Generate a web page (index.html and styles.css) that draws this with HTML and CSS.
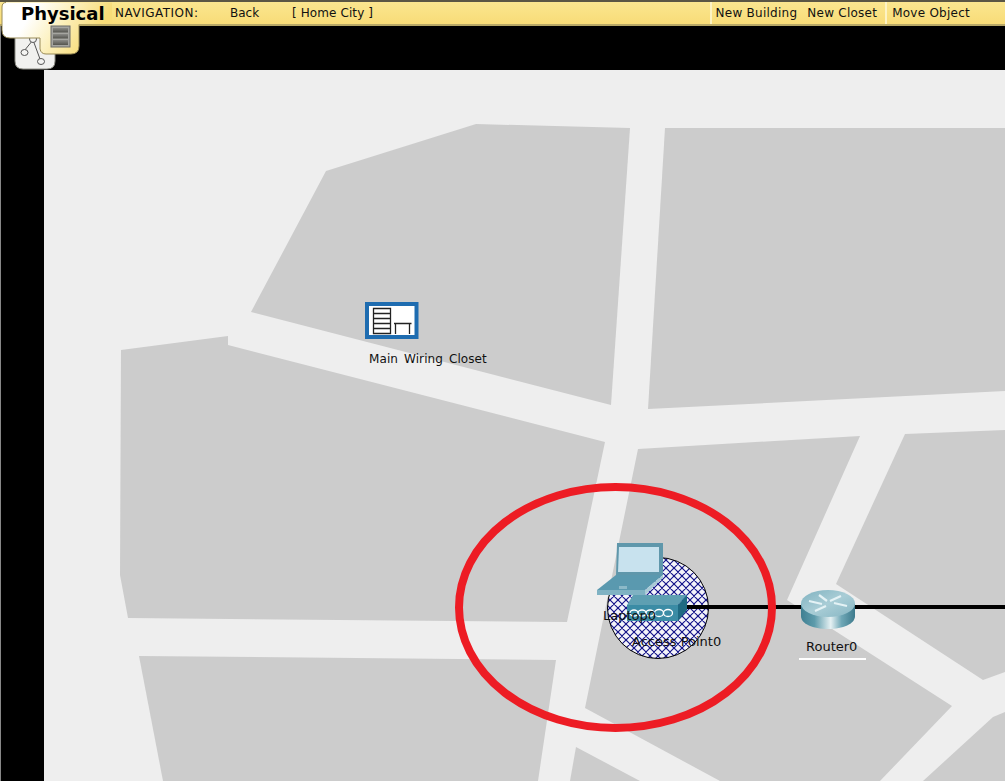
FILE: index.html
```html
<!DOCTYPE html>
<html lang="en">
<head>
<meta charset="utf-8">
<title>Physical Workspace</title>
<link rel="stylesheet" href="styles.css">
</head>
<body>
<div class="app">
  <header class="toolbar">
    <span class="title">Physical</span>
    <span class="nav-label">NAVIGATION:</span>
    <span class="nav-back">Back</span>
    <span class="nav-home">[ Home City ]</span>
    <div class="actions">
      <span class="action first">New Building</span>
      <span class="action">New Closet</span>
      <span class="action sep">Move Object</span>
    </div>
  </header>
  <main class="work">
    <svg class="map" viewBox="44 70 961 711" xmlns="http://www.w3.org/2000/svg">
      <defs>
        <pattern id="hatch" width="8" height="8" patternUnits="userSpaceOnUse" patternTransform="translate(2 0)">
          <rect width="8" height="8" fill="#f4f4fa"/>
          <path class="hatch-lines" d="M-1 -1L9 9M-1 9L9 -1M-1 7L1 9M7 -1L9 1M-1 1L1 -1M7 9L9 7"/>
          <path class="hatch-nodes" d="M4 2.800L5.200 4L4 5.200L2.800 4ZM0 -1.200L1.200 0L0 1.200L-1.200 0ZM8 -1.200L9.200 0L8 1.200L6.800 0ZM0 6.800L1.200 8L0 9.200L-1.200 8ZM8 6.800L9.200 8L8 9.200L6.800 8Z"/>
        </pattern>
        <linearGradient id="routerSide" x1="0" x2="1" y1="0" y2="0">
          <stop offset="0" stop-color="#3f7f92"/>
          <stop offset=".25" stop-color="#5d9bab"/>
          <stop offset=".55" stop-color="#e6f1f3"/>
          <stop offset=".75" stop-color="#6fa7b6"/>
          <stop offset="1" stop-color="#3d7a8c"/>
        </linearGradient>
        <linearGradient id="routerTop" x1="0" x2="1" y1="0" y2="1">
          <stop offset="0" stop-color="#7fb2c0"/>
          <stop offset=".5" stop-color="#a9cdd6"/>
          <stop offset="1" stop-color="#86b6c3"/>
        </linearGradient>
      </defs>
      <g class="blocks">
        <polygon points="251,312 326,171 476,124 630,128 611,405"/>
        <polygon points="665,128 1005,128 1005,391 648,409"/>
        <polygon points="121,350 228,336 228,345 605,442 567,622 128,618 120,575"/>
        <polygon points="638,449 860,436 787,600 952,706 880,781 720,781 585,708"/>
        <polygon points="139,656 556,660 538,781 163,781"/>
        <polygon points="576,747 640,781 570,781"/>
        <polygon points="905,434 1005,430 1005,672 983,680 836,584"/>
        <polygon points="993,717 1005,712 1005,781 923,781"/>
      </g>

      <circle class="range" cx="658" cy="608" r="50.500"/>
      <line class="cable" x1="687" y1="607" x2="1005" y2="607"/>

      <g class="closet">
        <rect class="closet-frame" x="367" y="304" width="49.500" height="33"/>
        <path class="closet-lines" d="M373.500 308.500H390.500V333.500H373.500ZM373.500 313.500H390.500M373.500 318.500H390.500M373.500 323.500H390.500M373.500 328.500H390.500M394 323.500H411.500M395.500 323.500V334M409.500 323.500V334"/>
      </g>
      <text class="label closet-label" x="369" y="363">Main Wiring Closet</text>

      <g class="laptop">
        <path fill="#5f97ab" d="M617 543H663V575H616Z"/>
        <path fill="#c8e2ee" d="M619 547H659V572H618Z"/>
        <path fill="#5a99af" d="M616 575H663L645 590H597Z"/>
        <path fill="#7fb2c3" d="M597 590H645V595H597Z"/>
        <path fill="#a9cbd6" d="M645 590L663 575V578L645 595Z"/>
        <path fill="#8cb9c8" d="M619 586H627V589H619Z"/>
      </g>
      <g class="ap">
        <path fill="#5e9fb2" d="M633 595H687L678 605H627Z"/>
        <path fill="#3b8ca5" d="M627 605H678V621H627Z"/>
        <path fill="#1f6a82" d="M678 605L687 595V610L678 621Z"/>
        <g class="waves">
          <ellipse cx="634" cy="613" rx="4" ry="3"/>
          <ellipse cx="642" cy="613" rx="4" ry="3"/>
          <ellipse cx="650" cy="613" rx="4" ry="3"/>
          <ellipse cx="659" cy="613" rx="4.500" ry="3.500"/>
          <ellipse cx="668" cy="613" rx="4.500" ry="3.500"/>
        </g>
      </g>
      <text class="label" x="603" y="620">Laptop0</text>
      <text class="label" x="632" y="646">Access Point0</text>

      <g class="router">
        <path fill="url(#routerSide)" d="M801 604V616C801 624 813 629 828 629S855 624 855 616V604Z"/>
        <ellipse cx="828" cy="603.500" rx="27" ry="13.500" fill="url(#routerTop)"/>
        <path class="arrows" d="M809 601L822 604M815 611L826 606M847 606L834 603M841 596L830 601M819 595L827 601"/>
      </g>
      <text class="label" x="806" y="651">Router0</text>
      <line class="underline" x1="799" y1="659" x2="866" y2="659"/>

      <ellipse class="ring" cx="615.500" cy="607.500" rx="156.500" ry="120.500"/>
    </svg>
  </main>

  <svg class="tabs" viewBox="0 0 112 72" xmlns="http://www.w3.org/2000/svg">
    <defs>
      <linearGradient id="tabFill" gradientUnits="userSpaceOnUse" x1="30" y1="15" x2="85" y2="50">
        <stop offset="0" stop-color="#ffffff"/>
        <stop offset="0.45" stop-color="#fcf1c0"/>
        <stop offset="1" stop-color="#f8dc78"/>
      </linearGradient>
      <linearGradient id="shelf" x1="0" x2="0" y1="0" y2="1">
        <stop offset="0" stop-color="#8a8a86"/>
        <stop offset="1" stop-color="#55554f"/>
      </linearGradient>
    </defs>
    <path class="logical-tab" d="M15 30H55V61Q55 69 47 69H23Q15 69 15 61Z"/>
    <g class="logical-icon">
      <line x1="33" y1="40" x2="24" y2="51"/>
      <line x1="33" y1="40" x2="40" y2="59"/>
      <circle cx="33" cy="39" r="3.500"/>
      <ellipse cx="24.500" cy="52.500" rx="3.500" ry="3"/>
      <ellipse cx="41" cy="61.500" rx="3.500" ry="3"/>
    </g>
    <path fill="url(#tabFill)" d="M6 2.500H112V24H79V46Q79 54 71 54H46Q41 54 40 49V38H10Q2 38 2 30V7Q2 2.500 6 2.500Z"/>
    <path class="tab-edge" d="M79 24.500V46Q79 54 71 54H46Q41 54 40 49V38H10Q2 38 2 30V7Q2 2.500 6 2.500"/>
    <rect class="rack" x="51" y="26" width="19" height="21"/>
    <rect class="rack-shelf" x="53" y="28" width="15" height="4.500" fill="url(#shelf)"/>
    <rect class="rack-shelf" x="53" y="34" width="15" height="4.500" fill="url(#shelf)"/>
    <rect class="rack-shelf" x="53" y="40" width="15" height="5" fill="url(#shelf)"/>
  </svg>
</div>
</body>
</html>
```
FILE: styles.css
```css
* { box-sizing: border-box; }
html, body { margin: 0; height: 100%; }
body { overflow: hidden; background: #000; font-family: "DejaVu Sans", Verdana, sans-serif; }

.app { position: relative; display: flex; flex-direction: column; height: 781px; width: 1005px; }

.toolbar {
  flex: 0 0 26px;
  display: flex;
  align-items: center;
  padding: 0 0 0 21px;
  border-top: 2px solid #5b5644;
  border-bottom: 2px solid #b8a866;
  background: linear-gradient(#fbe68f, #f8dc78);
  font-size: 12px;
  color: #111;
}
.title { position: relative; z-index: 4; width: 94px; font-size: 18px; font-weight: bold; color: #000; }
.nav-label { position: relative; z-index: 4; width: 115px; letter-spacing: .5px; }
.nav-back { width: 62px; }
.nav-home { letter-spacing: .1px; }
.actions { margin-left: auto; display: flex; height: 100%; padding-right: 30px; }
.action { display: flex; align-items: center; padding: 0 5px; letter-spacing: .25px; }
.action.first { border-left: 2px solid #fdf3c4; padding-left: 4px; }
.action.sep { border-left: 2px solid #fdf3c4; margin-left: 3px; }

.work { flex: 1; min-height: 0; padding: 44px 0 0 43px; background: #000; border-left: 1px solid #888; }
.map { display: block; width: 961px; height: 711px; background: #eeeeee; }

.blocks polygon { fill: #cccccc; }
.range { fill: url(#hatch); stroke: #000; stroke-width: 1; }
.hatch-lines { fill: none; stroke: #14148a; stroke-width: 1.150; }
.hatch-nodes { fill: #14148a; }
.cable { stroke: #000; stroke-width: 4; }
.closet-frame { fill: #fff; stroke: #1e6cb0; stroke-width: 4; }
.closet-lines { fill: none; stroke: #222; stroke-width: 1.300; }
.waves ellipse { fill: none; stroke: #fff; stroke-width: 1.300; }
.arrows { fill: none; stroke: #e4f2f5; stroke-width: 2.200; }
.ring { fill: none; stroke: #ed1c24; stroke-width: 8; }
.underline { stroke: #fff; stroke-width: 2; }
.label { font-family: "DejaVu Sans", Verdana, sans-serif; font-size: 13px; fill: #111; }
.closet-label { font-size: 12px; word-spacing: 2px; letter-spacing: .1px; }

.tabs { position: absolute; left: 0; top: 0; width: 112px; height: 72px; z-index: 3; pointer-events: none; }
.logical-tab { fill: #f1f1ef; stroke: #8d8d85; stroke-width: 1; }
.logical-icon line, .logical-icon circle, .logical-icon ellipse { fill: #f4f4f2; stroke: #555; stroke-width: 1; }
.tab-edge { fill: none; stroke: #9a8c58; stroke-width: 1; }
.rack { fill: #a5a5a0; stroke: #6d6d68; stroke-width: 1; }
```
